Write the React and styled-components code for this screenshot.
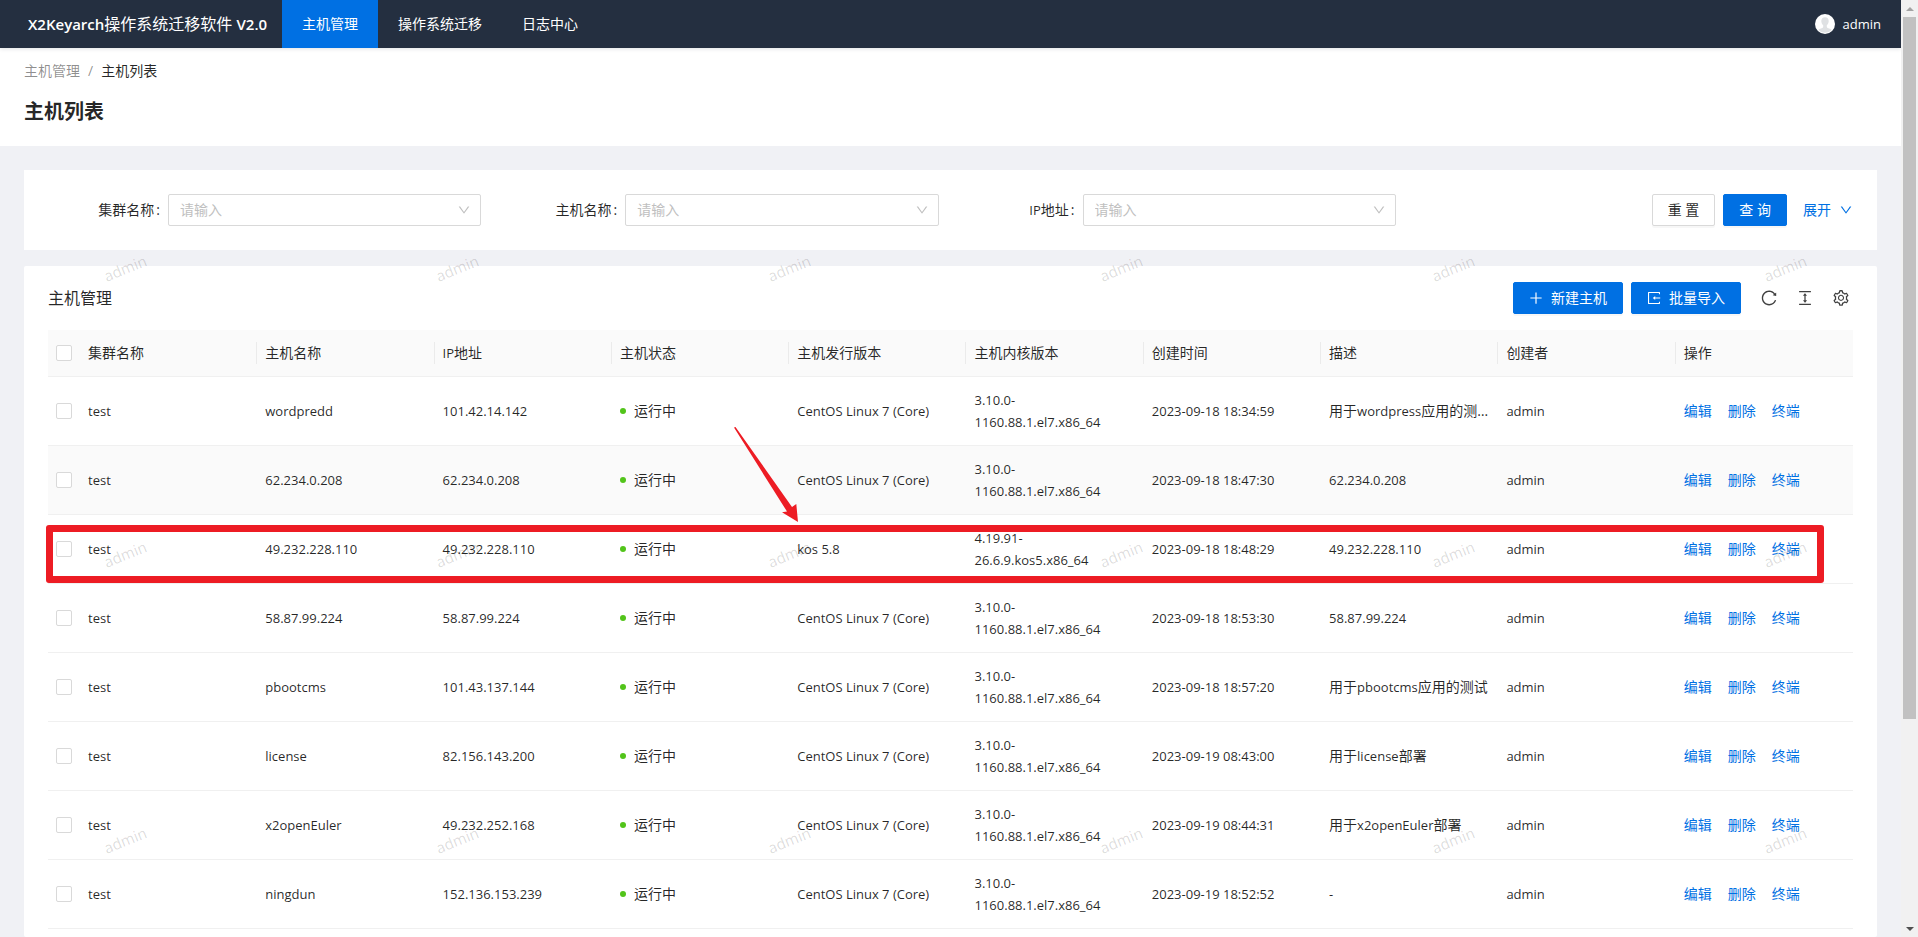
import React from 'react';
import styled, { createGlobalStyle } from 'styled-components';
import {
  AiOutlineColumnHeight,
  AiOutlineDown,
  AiOutlinePlus,
  AiOutlineReload,
  AiOutlineSetting,
} from 'react-icons/ai';

const GlobalStyle = createGlobalStyle`
  *, :before, :after {
    box-sizing: border-box;
  }

  body {
    margin: 0;
    font-family: "Open Sans", "Noto Sans CJK SC", sans-serif;
    font-size: 14px;
    line-height: 22px;
    color: rgba(0, 0, 0, .85);
    background: #f0f1f5;
  }

  button, select, input {
    font-family: inherit;
    font-size: inherit;
    line-height: inherit;
    color: inherit;
  }
`;

const Shell = styled.div`
  display: grid;
  grid-template-columns: 1fr 17px;
  height: 100vh;
  overflow: hidden;
`;

const Page = styled.div`
  display: flex;
  flex-direction: column;
  min-width: 0;
  overflow: hidden;
`;

const Latin = styled.span`
  font-size: 13px;
`;

const TopBar = styled.header`
  display: flex;
  flex-shrink: 0;
  height: 48px;
  line-height: 48px;
  color: #fff;
  background: #242f40;
  box-shadow: 0 1px 4px rgba(0, 21, 41, .12);
  position: relative;
`;

const Brand = styled.div`
  padding: 0 15px 0 28px;
  font-size: 16px;
  white-space: nowrap;
`;

const BrandName = styled.span`
  font-size: 15px;
  font-weight: 600;
`;

const Menu = styled.nav`
  display: flex;
  flex: 1;
`;

const MenuItem = styled.a`
  padding: 0 20px;
  color: #fff;
  text-decoration: none;
  background: ${({ $active }) => ($active ? '#0070e3' : 'transparent')};
`;

const User = styled.div`
  display: flex;
  align-items: center;
  gap: 8px;
  padding-right: 20px;
`;

const PageHeader = styled.div`
  flex-shrink: 0;
  padding: 12px 24px 16px;
  background: #fff;
`;

const Breadcrumb = styled.nav`
  display: flex;
  gap: 8px;
  color: rgba(0, 0, 0, .45);
`;

const Crumb = styled.a`
  color: ${({ $current }) => ($current ? 'rgba(0, 0, 0, .85)' : 'inherit')};
  text-decoration: none;
`;

const PageTitle = styled.h1`
  margin: 12px 0 0;
  font-size: 20px;
  line-height: 36px;
  font-weight: 700;
`;

const Content = styled.main`
  display: flex;
  flex-direction: column;
  flex: 1;
  gap: 16px;
  padding: 24px 24px 0;
  position: relative;
`;

const SearchForm = styled.form`
  display: grid;
  grid-template-columns: repeat(4, minmax(0, 1fr));
  gap: 24px;
  padding: 24px;
  background: #fff;
`;

const Field = styled.div`
  display: grid;
  grid-template-columns: 120px minmax(0, 1fr);
  align-items: center;
`;

const FieldLabel = styled.label`
  padding-right: 8px;
  text-align: right;
`;

const Colon = styled.span`
  margin-left: 2px;
`;

const SelectBox = styled.div`
  display: grid;
  position: relative;
`;

const Select = styled.select`
  appearance: none;
  height: 32px;
  padding: 0 30px 0 11px;
  border: 1px solid #d9d9d9;
  border-radius: 2px;
  color: #bfbfbf;
  background: #fff;
`;

const SelectArrow = styled(AiOutlineDown)`
  position: absolute;
  right: 10px;
  top: 9px;
  font-size: 14px;
  color: #bfbfbf;
  pointer-events: none;
`;

const FormActions = styled.div`
  display: flex;
  align-items: center;
  justify-content: flex-end;
  gap: 8px;
`;

const Button = styled.button`
  display: flex;
  align-items: center;
  height: 32px;
  padding: 0 15px;
  border: 1px solid ${({ $primary }) => ($primary ? '#0070e3' : '#d9d9d9')};
  border-radius: 2px;
  color: ${({ $primary }) => ($primary ? '#fff' : 'rgba(0, 0, 0, .85)')};
  background: ${({ $primary }) => ($primary ? '#0070e3' : '#fff')};
  box-shadow: 0 2px 0 rgba(0, 0, 0, .03);
  white-space: nowrap;
`;

const ToolbarButton = styled(Button)`
  gap: 7px;
  padding-left: 14px;
`;

const ExpandLink = styled.a`
  display: flex;
  align-items: center;
  gap: 8px;
  margin-left: 8px;
  color: #0070e3;
  text-decoration: none;
  white-space: nowrap;
`;

const Panel = styled.section`
  flex: 1;
  padding: 0 24px;
  border-radius: 2px;
  background: #fff;
`;

const Toolbar = styled.div`
  display: flex;
  align-items: center;
  gap: 8px;
  height: 64px;
`;

const PanelTitle = styled.h2`
  flex: 1;
  margin: 0;
  font-size: 16px;
  font-weight: 400;
`;

const ToolIcons = styled.div`
  display: flex;
  gap: 18px;
  padding: 0 3px 0 11px;
`;

const IconButton = styled.button`
  display: flex;
  padding: 0;
  border: 0;
  font-size: 18px;
  color: rgba(0, 0, 0, .75);
  background: none;
`;

const TableWrap = styled.div`
  position: relative;
`;

const Table = styled.table`
  width: 100%;
  table-layout: fixed;
  border-collapse: separate;
  border-spacing: 0;
`;

const HeadCell = styled.th`
  padding: 12px 8px;
  border-bottom: 1px solid #f0f0f0;
  font-weight: 400;
  text-align: left;
  background: #fafafa;
  position: relative;

  &:not(:first-child):not(:last-child):after {
    content: '';
    position: absolute;
    top: 12px;
    right: 0;
    width: 1px;
    height: 22px;
    background: rgba(0, 0, 0, .06);
  }
`;

const CheckHeadCell = styled(HeadCell)`
  width: 32px;
`;

const Row = styled.tr`
  background: ${({ $hovered }) => ($hovered ? '#fafafa' : '#fff')};
`;

const Cell = styled.td`
  height: 69px;
  padding: 12px 8px;
  border-bottom: 1px solid #f0f0f0;
  vertical-align: middle;
  overflow-wrap: break-word;
`;

const LatinCell = styled(Cell)`
  font-size: 13px;
`;

const EllipsisCell = styled(Cell)`
  overflow: hidden;
  text-overflow: ellipsis;
  white-space: nowrap;
`;

const Checkbox = styled.input`
  appearance: none;
  display: block;
  width: 16px;
  height: 16px;
  margin: 0;
  border: 1px solid #d9d9d9;
  border-radius: 2px;
  background: #fff;
`;

const Status = styled.span`
  display: flex;
  align-items: center;
  gap: 8px;
`;

const StatusDot = styled.span`
  width: 6px;
  height: 6px;
  border-radius: 50%;
  background: #52c41a;
`;

const RowActions = styled.div`
  display: flex;
  gap: 16px;
`;

const ActionLink = styled.a`
  color: #0070e3;
  text-decoration: none;
`;

// red marker over the migrated host
const Highlight = styled.div`
  position: absolute;
  top: 195px;
  left: -2px;
  right: 29px;
  height: 58px;
  border: 7px solid #ed1c24;
  border-radius: 3px;
  pointer-events: none;
`;

const Arrow = styled.svg`
  position: absolute;
  top: 97px;
  left: 686px;
  pointer-events: none;
`;

const Watermark = styled.div`
  position: absolute;
  inset: 0;
  display: grid;
  grid-template-columns: repeat(auto-fill, 332px);
  grid-auto-rows: 286px;
  padding: 111px 0 0 103px;
  margin-right: -332px;
  overflow: hidden;
  pointer-events: none;
`;

const WatermarkText = styled.span`
  justify-self: start;
  align-self: start;
  font-size: 15px;
  color: rgba(0, 0, 0, .15);
  transform: rotate(-22deg);
`;

const Scrollbar = styled.div`
  display: flex;
  flex-direction: column;
  align-items: center;
  background: #f1f1f1;
`;

const ScrollArrow = styled.div`
  display: flex;
  align-items: center;
  justify-content: center;
  height: 17px;
`;

const ScrollThumb = styled.div`
  flex: 702;
  width: 13px;
  background: #c1c1c1;
`;

const ScrollSpace = styled.div`
  flex: 201;
`;

const menu = ['主机管理', '操作系统迁移', '日志中心'];

const filters = [
  { id: 'cluster', label: '集群名称' },
  { id: 'host', label: '主机名称' },
  { id: 'ip', label: 'IP地址' },
];

const columns = [
  '集群名称', '主机名称', 'IP地址', '主机状态', '主机发行版本',
  '主机内核版本', '创建时间', '描述', '创建者', '操作',
];

const CENTOS = 'CentOS Linux 7 (Core)';
const CENTOS_KERNEL = ['3.10.0-', '1160.88.1.el7.x86_64'];

const hosts = [
  { name: 'wordpredd', ip: '101.42.14.142', os: CENTOS, kernel: CENTOS_KERNEL, created: '2023-09-18 18:34:59', desc: '用于wordpress应用的测试' },
  { name: '62.234.0.208', ip: '62.234.0.208', os: CENTOS, kernel: CENTOS_KERNEL, created: '2023-09-18 18:47:30', desc: '62.234.0.208', hovered: true },
  { name: '49.232.228.110', ip: '49.232.228.110', os: 'kos 5.8', kernel: ['4.19.91-', '26.6.9.kos5.x86_64'], created: '2023-09-18 18:48:29', desc: '49.232.228.110' },
  { name: '58.87.99.224', ip: '58.87.99.224', os: CENTOS, kernel: CENTOS_KERNEL, created: '2023-09-18 18:53:30', desc: '58.87.99.224' },
  { name: 'pbootcms', ip: '101.43.137.144', os: CENTOS, kernel: CENTOS_KERNEL, created: '2023-09-18 18:57:20', desc: '用于pbootcms应用的测试' },
  { name: 'license', ip: '82.156.143.200', os: CENTOS, kernel: CENTOS_KERNEL, created: '2023-09-19 08:43:00', desc: '用于license部署' },
  { name: 'x2openEuler', ip: '49.232.252.168', os: CENTOS, kernel: CENTOS_KERNEL, created: '2023-09-19 08:44:31', desc: '用于x2openEuler部署' },
  { name: 'ningdun', ip: '152.136.153.239', os: CENTOS, kernel: CENTOS_KERNEL, created: '2023-09-19 18:52:52', desc: '-' },
];

const Avatar = () => (
  <svg width="20" height="20" viewBox="0 0 20 20">
    <circle cx="10" cy="10" r="10" fill="#fff" />
    <path
      d="M10 3.2c-2.300 0-3.700 1.500-3.700 3.700 0 1.900.8 3.500 1.900 4.400v1.500c0 .5-.4.900-.9 1.100l-2.800 1.100c-.6.200-1 .6-1.200 1.100A9 9 0 0 0 10 18.800a9 9 0 0 0 6.700-2.700c-.2-.5-.6-.9-1.200-1.100l-2.800-1.100c-.5-.2-.9-.6-.9-1.100v-1.500c1.100-.9 1.900-2.500 1.900-4.400 0-2.200-1.400-3.700-3.700-3.700z"
      fill="#dfe1e3"
    />
  </svg>
);

const ImportIcon = () => (
  <svg width="16" height="16" viewBox="0 0 1024 1024" fill="currentColor">
    <path d="M888.3 757.4h-53.8c-4.200 0-7.700 3.500-7.700 7.700v61.800H197.100V197.100h629.800v61.800c0 4.200 3.500 7.700 7.700 7.700h53.800c4.200 0 7.700-3.400 7.700-7.700V158.700c0-17-13.700-30.700-30.700-30.700H158.700c-17 0-30.700 13.700-30.700 30.700v706.600c0 17 13.700 30.700 30.700 30.700h706.600c17 0 30.700-13.700 30.700-30.700V765.100c0-4.300-3.500-7.700-7.700-7.700z" />
    <path d="M902 476H588v-76c0-6.700-7.800-10.500-13-6.300l-141.900 112a8 8 0 0 0 0 12.600l141.900 112c5.300 4.200 13 .4 13-6.300v-76h314c4.400 0 8-3.600 8-8v-56c0-4.400-3.600-8-8-8z" />
  </svg>
);

const MixedText = ({ text }) => text.split(/([\x20-\x7e]+)/).map((part, i) => (
  i % 2 ? <Latin key={i}>{part}</Latin> : part
));

const HostRow = ({ host }) => (
  <Row $hovered={host.hovered}>
    <Cell><Checkbox type="checkbox" aria-label={host.name} /></Cell>
    <LatinCell>test</LatinCell>
    <LatinCell>{host.name}</LatinCell>
    <LatinCell>{host.ip}</LatinCell>
    <Cell><Status><StatusDot />运行中</Status></Cell>
    <LatinCell>{host.os}</LatinCell>
    <LatinCell>{host.kernel[0]}<br />{host.kernel[1]}</LatinCell>
    <LatinCell>{host.created}</LatinCell>
    <EllipsisCell><MixedText text={host.desc} /></EllipsisCell>
    <LatinCell>admin</LatinCell>
    <Cell>
      <RowActions>
        <ActionLink href="#edit">编辑</ActionLink>
        <ActionLink href="#delete">删除</ActionLink>
        <ActionLink href="#terminal">终端</ActionLink>
      </RowActions>
    </Cell>
  </Row>
);

const App = () => (
  <>
    <GlobalStyle />
    <Shell>
      <Page>
        <TopBar>
          <Brand>
            <BrandName>X2Keyarch</BrandName>操作系统迁移软件 <BrandName>V2.0</BrandName>
          </Brand>
          <Menu>
            {menu.map((item, i) => (
              <MenuItem key={item} href="#menu" $active={i === 0}>{item}</MenuItem>
            ))}
          </Menu>
          <User>
            <Avatar />
            <Latin>admin</Latin>
          </User>
        </TopBar>

        <PageHeader>
          <Breadcrumb>
            <Crumb href="#hosts">主机管理</Crumb>
            <span>/</span>
            <Crumb href="#list" $current>主机列表</Crumb>
          </Breadcrumb>
          <PageTitle>主机列表</PageTitle>
        </PageHeader>

        <Content>
          <SearchForm>
            {filters.map(({ id, label }) => (
              <Field key={id}>
                <FieldLabel htmlFor={id}><MixedText text={label} /><Colon>:</Colon></FieldLabel>
                <SelectBox>
                  <Select id={id}>
                    <option>请输入</option>
                  </Select>
                  <SelectArrow />
                </SelectBox>
              </Field>
            ))}
            <FormActions>
              <Button type="reset">重 置</Button>
              <Button type="button" $primary>查 询</Button>
              <ExpandLink href="#expand">展开<AiOutlineDown size={14} /></ExpandLink>
            </FormActions>
          </SearchForm>

          <Panel>
            <Toolbar>
              <PanelTitle>主机管理</PanelTitle>
              <ToolbarButton type="button" $primary><AiOutlinePlus size={16} />新建主机</ToolbarButton>
              <ToolbarButton type="button" $primary><ImportIcon />批量导入</ToolbarButton>
              <ToolIcons>
                <IconButton type="button" aria-label="刷新"><AiOutlineReload /></IconButton>
                <IconButton type="button" aria-label="密度"><AiOutlineColumnHeight /></IconButton>
                <IconButton type="button" aria-label="列设置"><AiOutlineSetting /></IconButton>
              </ToolIcons>
            </Toolbar>
            <TableWrap>
              <Table>
                <thead>
                  <tr>
                    <CheckHeadCell><Checkbox type="checkbox" aria-label="全选" /></CheckHeadCell>
                    {columns.map(column => (
                      <HeadCell key={column}><MixedText text={column} /></HeadCell>
                    ))}
                  </tr>
                </thead>
                <tbody>
                  {hosts.map(host => <HostRow key={host.name} host={host} />)}
                </tbody>
              </Table>
              <Highlight />
              <Arrow width="66" height="96" viewBox="0 0 66 96">
                <path d="M0 .5L1.500 0 58 80l4.300-3L64 95 48 85.300l5-.800z" fill="#ed1c24" />
              </Arrow>
            </TableWrap>
          </Panel>

          <Watermark aria-hidden="true">
            {Array.from({ length: 18 }, (_, i) => <WatermarkText key={i}>admin</WatermarkText>)}
          </Watermark>
        </Content>
      </Page>

      <Scrollbar>
        <ScrollArrow>
          <svg width="8" height="4" viewBox="0 0 8 4"><path d="M0 4l4-4 4 4z" fill="#a3a3a3" /></svg>
        </ScrollArrow>
        <ScrollThumb />
        <ScrollSpace />
        <ScrollArrow>
          <svg width="8" height="4" viewBox="0 0 8 4"><path d="M0 0l4 4 4-4z" fill="#505050" /></svg>
        </ScrollArrow>
      </Scrollbar>
    </Shell>
  </>
);

export default App;
